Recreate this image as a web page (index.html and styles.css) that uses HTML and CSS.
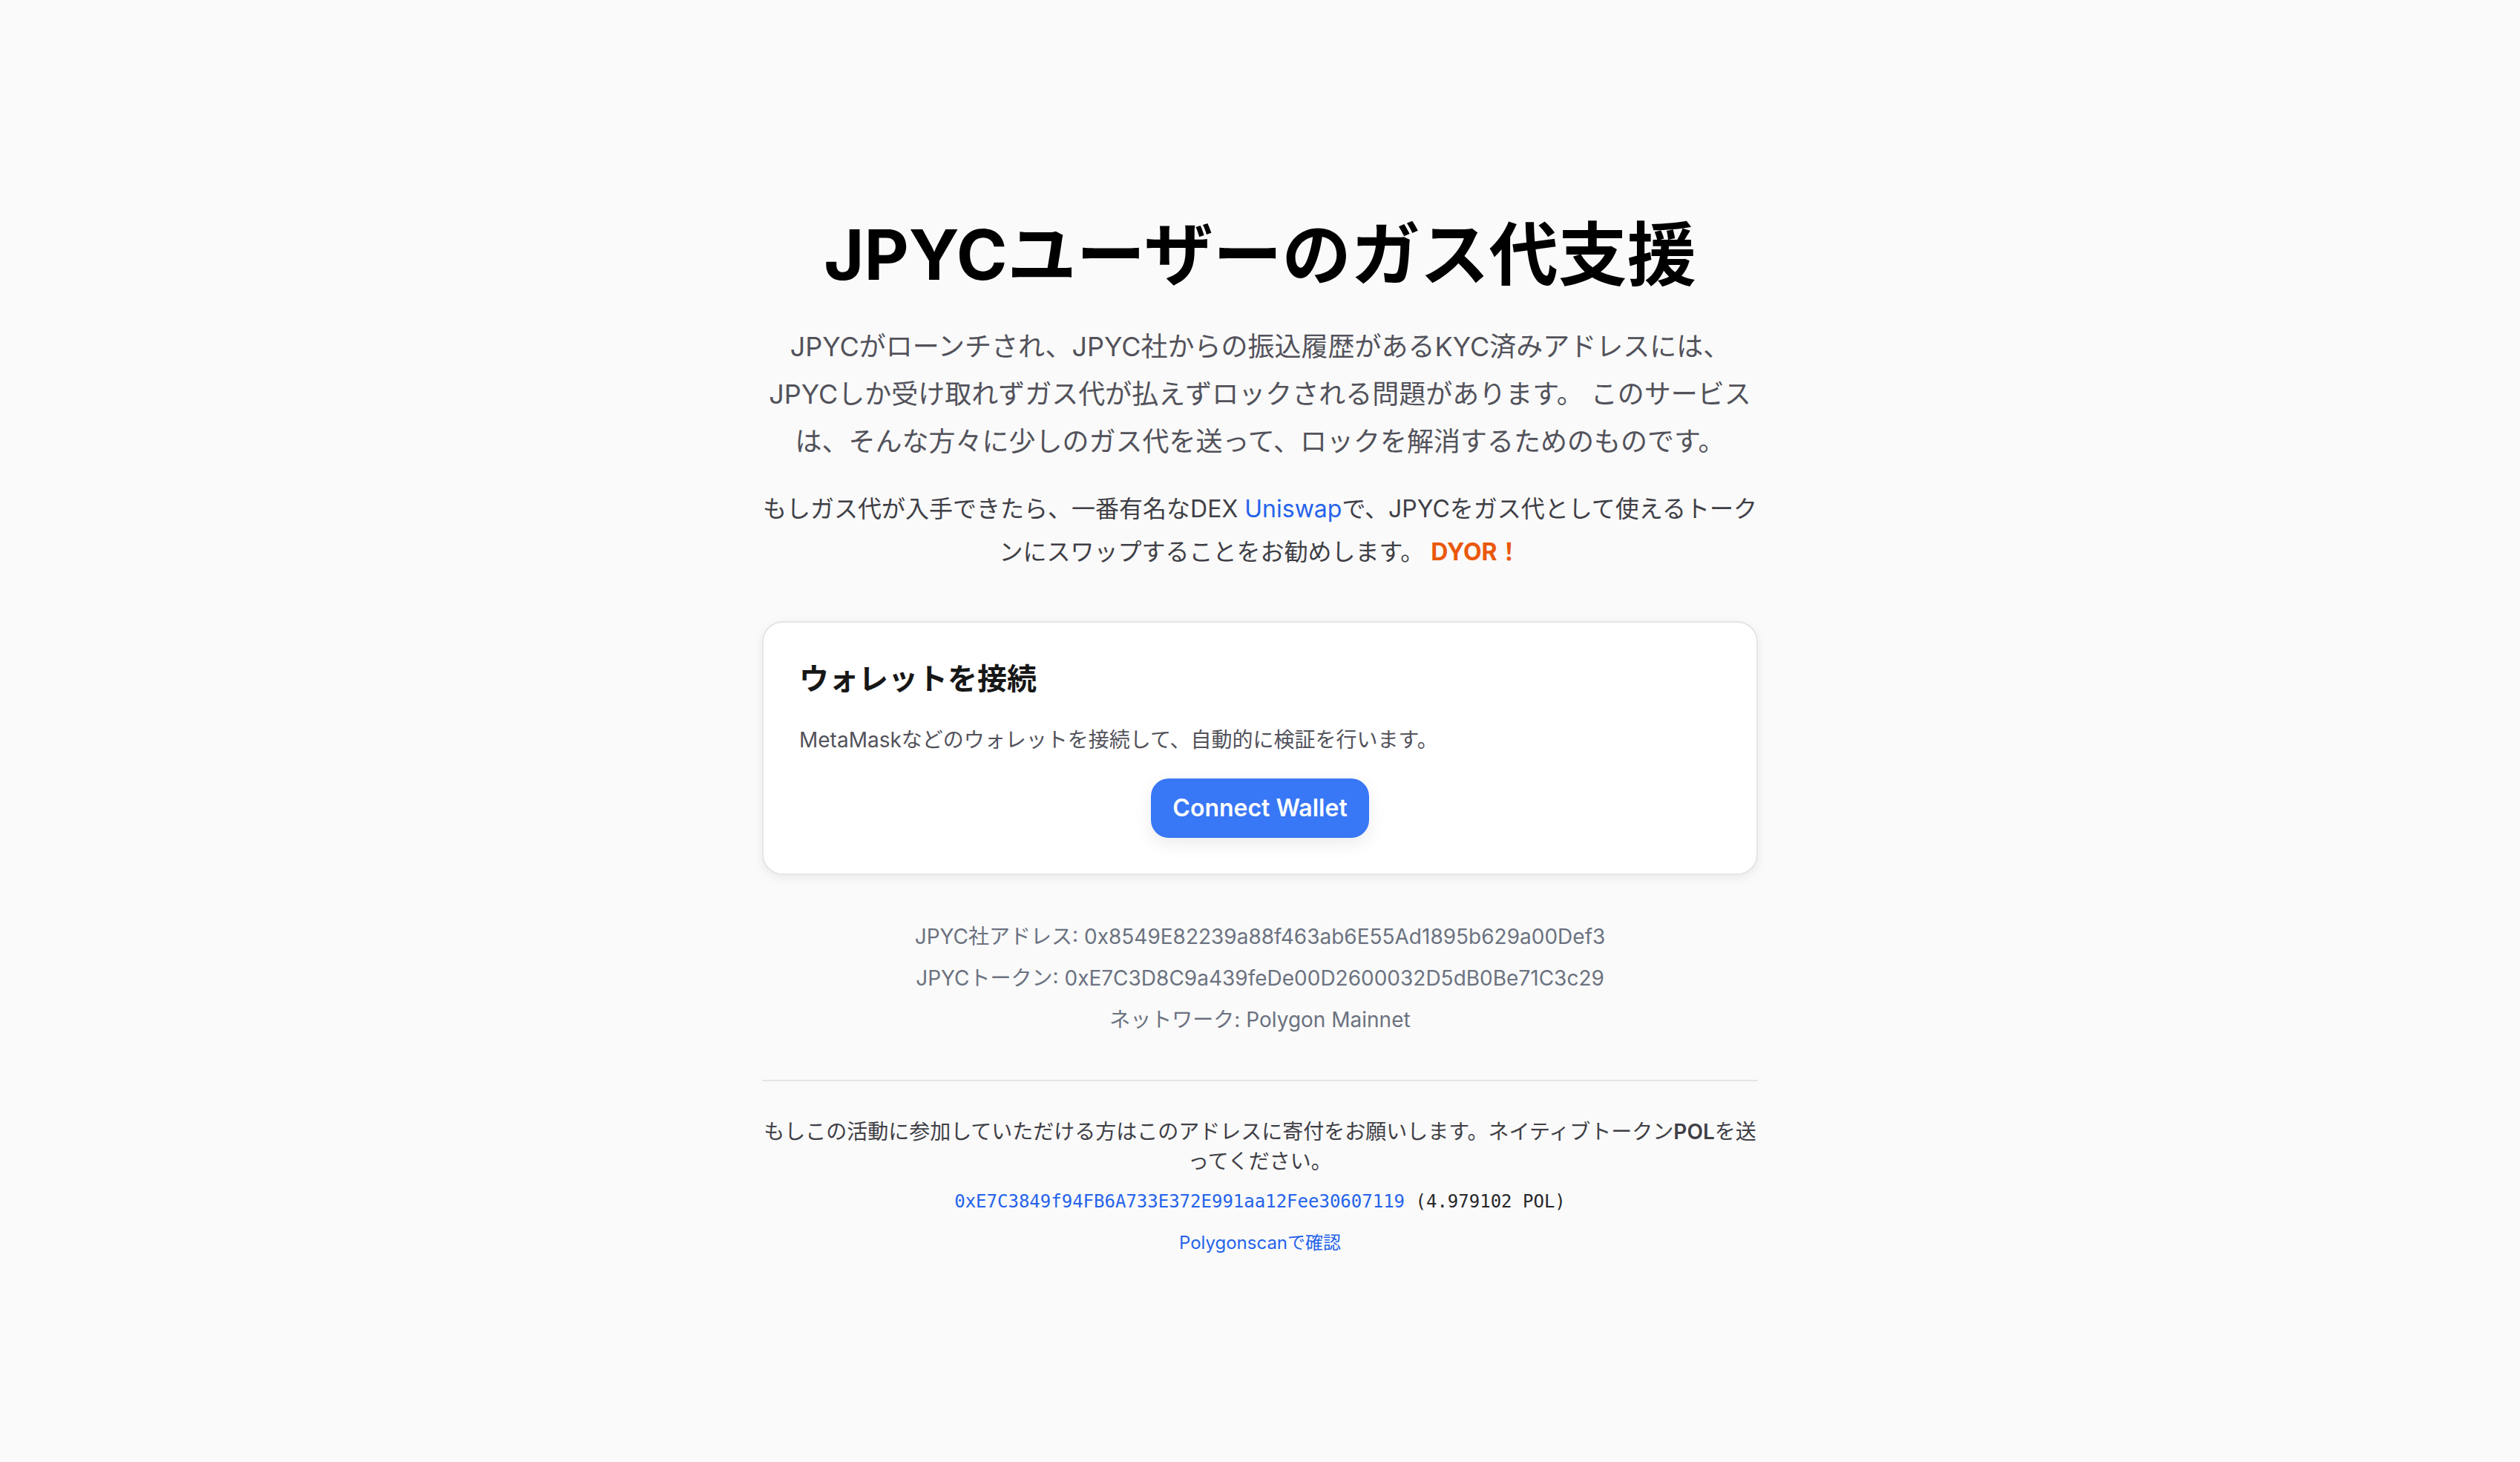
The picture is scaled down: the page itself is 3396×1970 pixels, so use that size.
FILE: index.html
```html
<!DOCTYPE html>
<html lang="ja">
<head>
<meta charset="UTF-8" />
<meta name="viewport" content="width=device-width, initial-scale=1.0" />
<title>JPYCユーザーのガス代支援</title>
<link rel="stylesheet" href="styles.css">
</head>
<body>
<main class="page">
  <h1 class="title">JPYCユーザーのガス代支援</h1>
  <p class="lead">JPYCがローンチされ、JPYC社からの振込履歴があるKYC済みアドレスには、JPYCしか受け取れずガス代が払えずロックされる問題があります。 このサービスは、そんな方々に少しのガス代を送って、ロックを解消するためのものです。</p>
  <p class="hint">もしガス代が入手できたら、一番有名なDEX <a class="link" href="#">Uniswap</a>で、JPYCをガス代として使えるトークンにスワップすることをお勧めします。 <strong class="dyor">DYOR！</strong></p>

  <section class="card">
    <h2 class="card-title">ウォレットを接続</h2>
    <p class="card-text">MetaMaskなどのウォレットを接続して、自動的に検証を行います。</p>
    <div class="card-actions">
      <button class="btn" type="button">Connect Wallet</button>
    </div>
  </section>

  <div class="info">
    <p>JPYC社アドレス: 0x8549E82239a88f463ab6E55Ad1895b629a00Def3</p>
    <p>JPYCトークン: 0xE7C3D8C9a439feDe00D2600032D5dB0Be71C3c29</p>
    <p>ネットワーク: Polygon Mainnet</p>
  </div>

  <footer class="donate">
    <p class="donate-text">もしこの活動に参加していただける方はこのアドレスに寄付をお願いします。ネイティブトークン<b>POL</b>を送ってください。</p>
    <p class="donate-addr"><a class="link" href="#">0xE7C3849f94FB6A733E372E991aa12Fee30607119</a> (4.979102 POL)</p>
    <p class="donate-scan"><a class="link" href="#">Polygonscanで確認</a></p>
  </footer>
</main>
</body>
</html>
```

FILE: styles.css
```css
body {
  margin: 0;
  background-color: #fafafa;
  font-family: Inter, "Noto Sans CJK JP", sans-serif;
  color: #111;
}
.page {
  width: 1342px;
  margin: 0 auto;
  padding-top: 283px;
  text-align: center;
}
.title {
  margin: 0;
  font-size: 93px;
  line-height: 120px;
  font-weight: 700;
  color: #000;
}
.lead {
  margin: 32px 0 0;
  font-size: 36px;
  line-height: 64px;
  color: #52525b;
}
.hint {
  margin: 30px 0 0;
  font-size: 32px;
  line-height: 58px;
  color: #3f3f46;
}
.link {
  color: #2563eb;
  text-decoration: none;
}
.dyor {
  color: #ea580c;
  font-weight: 700;
}
.card {
  margin-top: 64px;
  background-color: #fff;
  border: 2px solid #e5e5e5;
  border-radius: 28px;
  padding: 48px 48px 48px;
  text-align: left;
  box-shadow: 0 4px 14px rgba(0, 0, 0, 0.07);
}
.card-title {
  margin: 0;
  font-size: 40px;
  line-height: 56px;
  font-weight: 700;
  color: #171717;
}
.card-text {
  margin: 34px 0 0;
  font-size: 28px;
  line-height: 40px;
  color: #52525b;
}
.card-actions {
  display: flex;
  justify-content: center;
  margin-top: 32px;
}
.btn {
  font-family: Inter, sans-serif;
  font-size: 32px;
  line-height: 48px;
  font-weight: 600;
  color: #fff;
  background-color: #3877f5;
  border: none;
  border-radius: 24px;
  padding: 16px 29px;
  box-shadow: 0 8px 24px rgba(0, 0, 0, 0.08);
  cursor: pointer;
}
.info {
  margin-top: 63px;
  display: flex;
  flex-direction: column;
  gap: 16px;
  font-size: 28px;
  line-height: 40px;
  color: #6b7280;
}
.info p {
  margin: 0;
}
.donate {
  margin-top: 61px;
  border-top: 2px solid #e5e5e5;
  padding-top: 48px;
}
.donate p {
  margin: 0;
}
.donate-text {
  font-size: 28px;
  line-height: 40px;
  color: #3f3f46;
}
.donate-text b {
  font-weight: 600;
}
.donate-addr {
  margin-top: 16px !important;
  font-family: "DejaVu Sans Mono", "Liberation Mono", monospace;
  font-size: 24px;
  line-height: 36px;
  color: #27272a;
}
.donate-scan {
  margin-top: 22px !important;
  font-size: 24px;
  line-height: 32px;
}
```
